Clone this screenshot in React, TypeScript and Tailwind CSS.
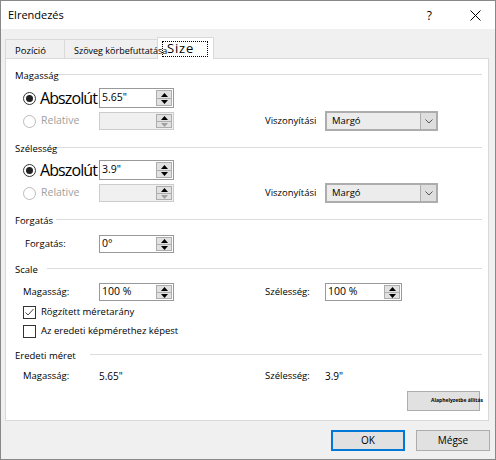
import React from "react";

function Spin({ disabled }: { disabled?: boolean }) {
  return (
    <div className="m-px flex w-[16px] flex-col">
      <div className="flex flex-1 items-end justify-center border border-[#adadad] bg-[#e1e1e1] pb-[1px]">
        <svg width="7" height="4" viewBox="0 0 7 4">
          <path d="M3.5 0L7 4H0z" fill="#000" />
        </svg>
      </div>
      <div className="flex flex-1 items-start justify-center border border-t-0 border-[#adadad] bg-[#e1e1e1] pt-[1px]">
        <svg width="7" height="4" viewBox="0 0 7 4">
          <path d="M0 0h7L3.5 4z" fill={disabled ? "#a0a0a0" : "#000"} />
        </svg>
      </div>
    </div>
  );
}

function NumInput({
  value,
  disabled,
  tall,
  wide,
}: {
  value?: string;
  disabled?: boolean;
  tall?: boolean;
  wide?: boolean;
}) {
  return (
    <div
      className={`flex ${wide ? "w-[77px]" : "w-[75px]"} ${tall ? "h-[20px]" : "h-[18px]"} border ${
        disabled ? "border-[#cccccc] bg-[#f0f0f0]" : "border-[#999999] bg-white"
      }`}
    >
      <div className="flex flex-1 items-center pl-[2px] text-[10.5px]">{value}</div>
      <Spin disabled={disabled} />
    </div>
  );
}

function Header({ label, gap }: { label: string; gap: string }) {
  return (
    <div className="flex h-[16px] items-start pl-[9px] leading-[16px]">
      <span>{label}</span>
      <div className={`mt-[6px] h-px flex-1 bg-[#dcdcdc] ${gap}`} />
    </div>
  );
}

function Radio({ checked }: { checked?: boolean }) {
  return (
    <div
      className={`flex h-[13px] w-[13px] shrink-0 items-center justify-center rounded-full border bg-white ${
        checked ? "border-[#333333]" : "border-[#bcbcbc]"
      }`}
    >
      {checked && <div className="h-[7px] w-[7px] rounded-full bg-[#222222]" />}
    </div>
  );
}

function Dropdown() {
  return (
    <div className="flex h-[20px] w-[113px] border-2 border-[#adadad] bg-[#ececec]">
      <div className="flex flex-1 items-center pl-[5px]">Margó</div>
      <div className="flex w-[16px] items-center justify-center border-l border-[#adadad] bg-[#dedede]">
        <svg width="8" height="5" viewBox="0 0 8 5">
          <path d="M0.5 0.5L4 4L7.5 0.5" fill="none" stroke="#555" strokeWidth="1" />
        </svg>
      </div>
    </div>
  );
}

function Checkbox({ checked, label, mt }: { checked?: boolean; label: string; mt: string }) {
  return (
    <div className={`flex h-[13px] items-center gap-[5px] pl-[17px] ${mt}`}>
      <div className="flex h-[13px] w-[13px] items-center justify-center border border-[#333333] bg-white">
        {checked && (
          <svg width="11" height="11" viewBox="0 0 11 11">
            <polyline points="1.5,5.5 4,8 9.5,2" fill="none" stroke="#444" strokeWidth="1" />
          </svg>
        )}
      </div>
      <span>{label}</span>
    </div>
  );
}

function SizeBlock({ value, mtA }: { value: string; mtA: string }) {
  return (
    <>
      <div className={`flex h-[20px] items-center pl-[17px] ${mtA}`}>
        <div className="flex w-[76px] items-center gap-[4px] whitespace-nowrap">
          <Radio checked />
          <span className="text-[16px] leading-[20px] tracking-[-0.9px]">Abszolút</span>
        </div>
        <NumInput value={value} tall />
      </div>
      <div className="mt-[3px] flex h-[20px] items-center pl-[17px]">
        <div className="flex w-[76px] items-center gap-[5px] whitespace-nowrap">
          <Radio />
          <span className="text-[10.5px] text-[#a0a0a0]">Relative</span>
        </div>
        <div className="w-[166px]">
          <NumInput disabled />
        </div>
        <div className="w-[60px]">Viszonyítási</div>
        <Dropdown />
      </div>
    </>
  );
}

export default function App() {
  return (
    <div className="flex h-[460px] w-[496px] flex-col border border-[#888888] bg-[#f0f0f0] font-['Open_Sans','Noto_Sans',sans-serif] text-[9.5px] text-black">
      {/* title bar */}
      <div className="flex h-[28px] items-center bg-white pl-[7px] pt-px">
        <span className="flex-1 text-[11px]">Elrendezés</span>
        <span className="mr-[38px] text-[12px]">?</span>
        <svg width="11" height="11" viewBox="0 0 11 11" className="mr-[14px]">
          <path d="M0.5 0.5L10.5 10.5M10.5 0.5L0.5 10.5" stroke="#000" strokeWidth="1" />
        </svg>
      </div>

      {/* tabs */}
      <div className="flex items-end pl-[4px] pt-[8px]">
        <div className="h-[19px] w-[59px] border-l border-t border-[#d9d9d9] pl-[9px] pt-[4px] leading-[13px]">
          Pozíció
        </div>
        <div className="relative z-20 h-[19px] w-[93px] whitespace-nowrap border-l border-t border-[#d9d9d9] pl-[9px] pt-[4px] text-[9px] leading-[13px]">
          Szöveg körbefuttatása
        </div>
        <div className="relative z-10 -mb-px h-[22px] w-[57px] border-l border-r border-t border-[#d9d9d9] bg-white pl-[4px] pt-[3px]">
          <div className="flex h-[16px] w-[46px] items-center border border-dotted border-black pl-[4px] text-[13px] tracking-[0.8px]">
            Size
          </div>
        </div>
      </div>

      {/* panel */}
      <div className="ml-[4px] h-[363px] w-[484px] border border-[#d9d9d9] bg-white pr-[6px] pt-[9px]">
        <Header label="Magasság" gap="ml-0" />
        <SizeBlock value={'5.65"'} mtA="mt-[4px]" />

        <div className="mt-[10px]">
          <Header label="Szélesség" gap="ml-0" />
        </div>
        <SizeBlock value={'3.9"'} mtA="mt-[3px]" />

        <div className="mt-[10px]">
          <Header label="Forgatás" gap="ml-[3px]" />
        </div>
        <div className="mt-[6px] flex h-[18px] items-center pl-[17px]">
          <div className="w-[76px] pl-[2px]">Forgatás:</div>
          <NumInput value="0°" />
        </div>

        <div className="mt-[9px]">
          <Header label="Scale" gap="ml-[9px]" />
        </div>
        <div className="mt-[5px] flex h-[18px] items-center pl-[17px]">
          <div className="w-[76px]">Magasság:</div>
          <div className="w-[166px]">
            <NumInput value="100 %" />
          </div>
          <div className="w-[60px]">Szélesség:</div>
          <NumInput value="100 %" wide />
        </div>
        <Checkbox checked label="Rögzített méretarány" mt="mt-[5px]" />
        <Checkbox label="Az eredeti képmérethez képest" mt="mt-[6px]" />

        <div className="mt-[10px]">
          <Header label="Eredeti méret" gap="ml-[14px]" />
        </div>
        <div className="mt-[4px] flex h-[16px] items-center pl-[17px]">
          <div className="w-[76px]">Magasság:</div>
          <div className="w-[166px] text-[10px]">5.65"</div>
          <div className="w-[60px]">Szélesség:</div>
          <div className="text-[10px]">3.9"</div>
        </div>
        <div className="mt-[7px] flex justify-end">
          <div className="mr-[2px] flex h-[20px] w-[73px] items-center whitespace-nowrap border border-[#adadad] bg-[#e1e1e1] pl-[23px] text-[5px] font-bold">
            Alaphelyzetbe állítás
          </div>
        </div>
      </div>

      {/* footer */}
      <div className="mt-[9px] flex justify-end gap-[11px] pr-[5px] text-[10px]">
        <div className="flex h-[21px] w-[74px] items-center justify-center border-2 border-[#0078d7] bg-[#e1e1e1]">
          OK
        </div>
        <div className="flex h-[21px] w-[74px] items-center justify-center border border-[#adadad] bg-[#e1e1e1]">
          Mégse
        </div>
      </div>
    </div>
  );
}
